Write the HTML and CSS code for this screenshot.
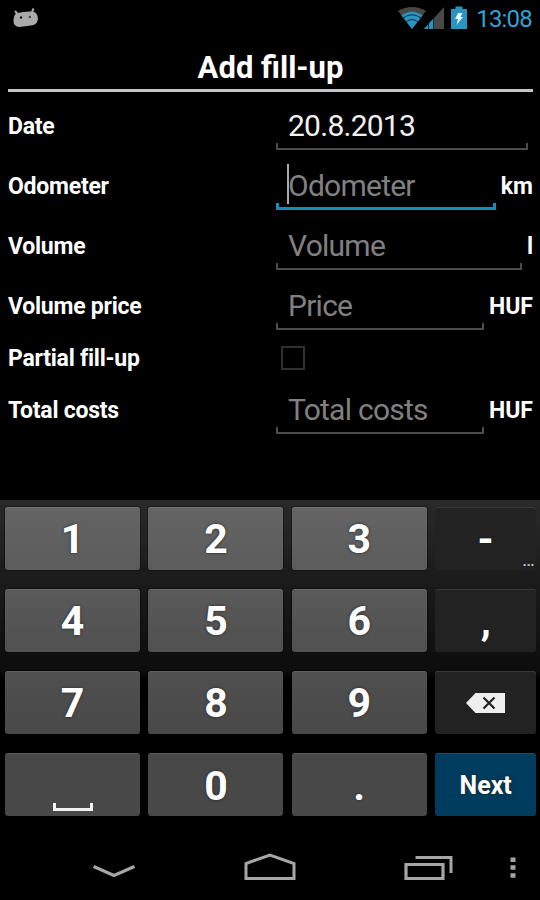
FILE: index.html
```html
<!DOCTYPE html>
<html lang="en">
<head>

    <meta charset="UTF-8">
    <title>Add fill-up</title>

    <meta name="viewport" content="width=device-width, initial-scale=1">

    <link rel="stylesheet" href="styles.css">

</head>
<body>

    <div class="status-bar">
        <svg class="icon-debug" width="26" height="20" viewBox="0 0 26 20">
            <path d="M4.500 6L2 3M19 4L20.500 0.500" stroke="#aaa" stroke-width="2"/>
            <path d="M4 5Q12 3 20 3.500Q25 5 25 11Q24 17 18 17.500L6 19Q0 18 0.500 12Q1 6 4 5Z" fill="#aaa"/>
            <circle cx="8" cy="9.500" r="1.200" fill="#111"/>
            <circle cx="16.800" cy="9" r="1.200" fill="#444"/>
        </svg>
        <div class="status-icons">
            <svg width="28" height="22" viewBox="0 0 28 22">
                <path d="M0 4Q14 -4 28 4L14 22Z" fill="#484848"/>
                <path d="M3.500 8.500Q14 1 24.500 8.500L14 22Z" fill="#2a94c0"/>
                <path d="M5 11Q14 4.500 23 11M8 15Q14 10 20 15" fill="none" stroke="#0b2c3a" stroke-width="1"/>
            </svg>
            <svg class="icon-signal" width="20" height="22" viewBox="0 0 20 22">
                <path d="M0 22L20 0V22Z" fill="#484848"/>
                <path d="M0 22L9 12V22Z" fill="#2a94c0"/>
                <path d="M4.500 17V22M9.500 11V22" stroke="#0b2c3a" stroke-width="1"/>
            </svg>
            <svg class="icon-battery" width="16" height="23" viewBox="0 0 16 23">
                <path d="M0 3H4.500V0.500H11.500V3H16V23H0Z" fill="#2a94c0"/>
                <path d="M7 7H11.500L9.500 11H12L5.500 19L7 13H4Z" fill="#e4f4fa"/>
            </svg>
            <span class="clock">13:08</span>
        </div>
    </div>

    <h1>Add fill-up</h1>

    <div class="form">

        <div class="row">
            <span class="label">Date</span>
            <span class="field filled"><span>20.8.2013</span></span>
        </div>

        <div class="row">
            <span class="label">Odometer</span>
            <span class="field focused"><span>Odometer</span></span>
            <span class="unit">km</span>
        </div>

        <div class="row">
            <span class="label">Volume</span>
            <span class="field"><span>Volume</span></span>
            <span class="unit">l</span>
        </div>

        <div class="row">
            <span class="label">Volume price</span>
            <span class="field"><span>Price</span></span>
            <span class="unit">HUF</span>
        </div>

        <div class="row row-check">
            <span class="label">Partial fill-up</span>
            <span class="checkbox"></span>
        </div>

        <div class="row">
            <span class="label">Total costs</span>
            <span class="field"><span>Total costs</span></span>
            <span class="unit">HUF</span>
        </div>

    </div>

    <div class="keyboard">
        <div class="key shade-1">1</div>
        <div class="key shade-1">2</div>
        <div class="key shade-1">3</div>
        <div class="key dark"><span>-</span><span class="more">...</span></div>

        <div class="key shade-2">4</div>
        <div class="key shade-2">5</div>
        <div class="key shade-2">6</div>
        <div class="key dark">,</div>

        <div class="key shade-3">7</div>
        <div class="key shade-3">8</div>
        <div class="key shade-3">9</div>
        <div class="key dark">
            <svg width="39" height="20" viewBox="0 0 39 20">
                <path d="M0 10L9.500 0H39V20H9.500Z" fill="#eee"/>
                <path d="M17.500 4.500L28.500 15.500M28.500 4.500L17.500 15.500" stroke="#222" stroke-width="2.200"/>
            </svg>
        </div>

        <div class="key shade-4 space">
            <svg width="40" height="8" viewBox="0 0 40 8">
                <path d="M1.500 0V6.500H38.500V0" fill="none" stroke="#f2f2f2" stroke-width="3"/>
            </svg>
        </div>
        <div class="key shade-4">0</div>
        <div class="key shade-4">.</div>
        <div class="key next">Next</div>
    </div>

    <div class="nav-bar">
        <svg width="42" height="28" viewBox="0 0 42 28">
            <path d="M0.500 13.500L21 22.500L41.500 13.500" fill="none" stroke="#a6a6a6" stroke-width="3.200"/>
        </svg>
        <svg width="52" height="28" viewBox="0 0 52 28">
            <path d="M2 25.500V10.500L26 2L50 10.500V25.500Z" fill="none" stroke="#a6a6a6" stroke-width="3"/>
        </svg>
        <svg width="50" height="28" viewBox="0 0 50 28">
            <path d="M2 11.500H39V25.500H2Z" fill="none" stroke="#a6a6a6" stroke-width="3.200"/>
            <path d="M11.500 4.500H47V20" fill="none" stroke="#a6a6a6" stroke-width="3"/>
        </svg>
        <svg width="6" height="28" viewBox="0 0 6 28">
            <path d="M0.500 4.500h5v4.500h-5zM0.500 12.300h5v4.500h-5zM0.500 20.200h5v4.500h-5z" fill="#a6a6a6"/>
        </svg>
    </div>

</body>
</html>
```
FILE: styles.css
```css
html {
    box-sizing: border-box;
}

*,
*:before,
*:after {
    box-sizing: inherit;
}

body {
    display: flex;
    flex-direction: column;
    width: 540px;
    height: 900px;
    margin: 0;
    overflow: hidden;
    background: #000;
    color: #fff;
    font-family: Roboto, "Liberation Sans", sans-serif;
}

svg {
    display: block;
    flex: none;
}

.status-bar {
    display: flex;
    justify-content: space-between;
    height: 38px;
    padding: 7px 8px 0 13px;
}

.icon-debug {
    margin-top: 1px;
}

.status-icons {
    display: flex;
    align-items: flex-start;
}

.icon-signal {
    margin-left: -2px;
}

.icon-battery {
    margin: -1px 9px 0 7px;
}

.clock {
    color: #2fa3d3;
    font-size: 24px;
    line-height: 24px;
    letter-spacing: -.8px;
}

h1 {
    height: 54px;
    margin: 0 7px 0 8px;
    border-bottom: 3px solid #c4c4c4;
    font-size: 31px;
    line-height: 60px;
    text-align: center;
}

.form {
    height: 408px;
    padding: 4px 7px 0 8px;
}

.row {
    display: flex;
    align-items: center;
    height: 60px;
}

.row-check {
    height: 44px;
}

.label,
.unit {
    padding-top: 2px;
    font-size: 23px;
    font-weight: bold;
    line-height: 60px;
}

.label {
    width: 268px;
    letter-spacing: -.25px;
}

.field {
    --line: #4c4c4c;
    --weight: 2px;
    flex: 1;
    height: 48px;
    margin-right: 5px;
    padding-left: 12px;
    background:
        linear-gradient(var(--line), var(--line)) left bottom / 100% var(--weight) no-repeat,
        linear-gradient(var(--line), var(--line)) left bottom / var(--weight) 7px no-repeat,
        linear-gradient(var(--line), var(--line)) right bottom / var(--weight) 7px no-repeat;
    color: #808080;
    font-size: 30px;
    line-height: 47px;
    letter-spacing: -.75px;
}

.filled {
    color: #f0f0f0;
}

.focused {
    --line: #128bbd;
    --weight: 3px;
    position: relative;
}

/* text cursor */
.focused:before {
    content: "";
    position: absolute;
    left: 11px;
    top: 2px;
    width: 2px;
    height: 40px;
    background: #aaa;
}

.checkbox {
    width: 24px;
    height: 24px;
    margin-left: 5px;
    border: 2px solid #303030;
}

.keyboard {
    display: grid;
    grid-template-columns: 135px 135px 135px 101px;
    grid-template-rows: repeat(4, 63px);
    gap: 19.200px 8.400px;
    height: 337px;
    padding: 6.600px 0 0 5px;
    background: linear-gradient(#2a2a2a, #1b1b1b 80px, #0d0d0d 170px, #000 180px);
}

.key {
    position: relative;
    display: flex;
    align-items: center;
    justify-content: center;
    padding-top: 2px;
    border-radius: 3px;
    box-shadow: inset 0 1px rgba(255, 255, 255, .1), 0 0 2px #000;
    font-size: 41px;
    font-weight: bold;
    text-shadow: 0 0 3px #222;
}

.shade-1 {
    background: linear-gradient(#646464, #5c5c5c);
}

.shade-2 {
    background: linear-gradient(#5a5a5a, #505050);
}

.shade-3 {
    background: linear-gradient(#505050, #494949);
}

.shade-4 {
    background: #484848;
}

.dark {
    background: #222;
    box-shadow: inset 0 1px #383838;
}

.more {
    position: absolute;
    right: 2px;
    bottom: 3px;
    color: #bbb;
    font-size: 15px;
    line-height: 12px;
    font-weight: bold;
    letter-spacing: -.5px;
}

.space {
    align-items: flex-end;
    padding-bottom: 5px;
}

.next {
    background: #003c5e;
    font-size: 25px;
}

.nav-bar {
    display: flex;
    height: 63px;
    padding: 16px 0 0 93px;
}

.nav-bar svg:nth-child(2) {
    margin-left: 109px;
}

.nav-bar svg:nth-child(3) {
    margin-left: 108px;
}

.nav-bar svg:nth-child(4) {
    margin-left: 56px;
}
```
